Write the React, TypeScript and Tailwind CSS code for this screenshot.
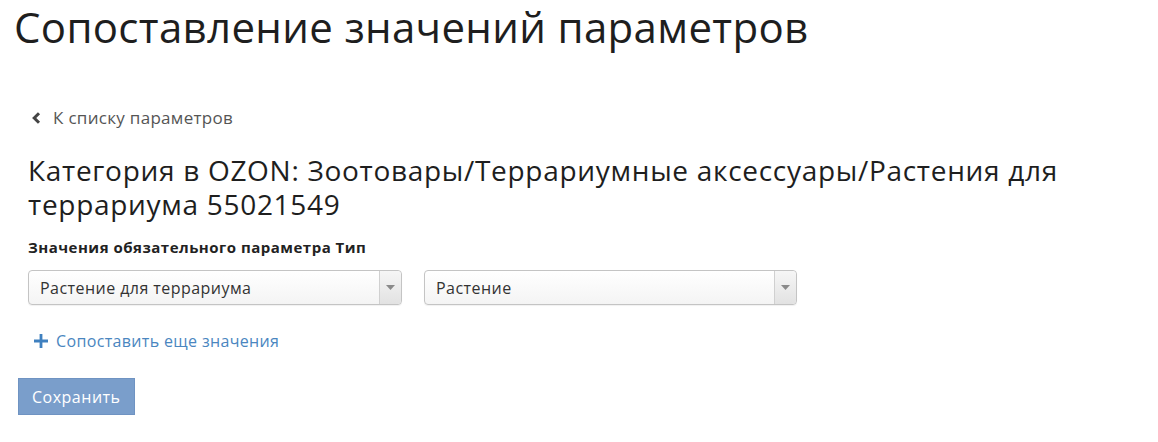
import React from "react";

function Select({ value, width }: { value: string; width: string }) {
  return (
    <div
      className={`${width} h-[35px] flex items-stretch rounded-[4px] border border-[#c4c4c4] bg-gradient-to-b from-white to-[#f4f4f4] shadow-[0_1px_1px_rgba(0,0,0,0.06)]`}
    >
      <div className="flex-1 flex items-center pl-[11px] text-[16px] tracking-[0.45px] text-[#333]">{value}</div>
      <div className="w-[22px] flex items-center justify-center border-l border-[#d0d0d0] bg-gradient-to-b from-[#f6f6f6] to-[#e2e2e2] rounded-r-[4px]">
        <svg width="9" height="5" viewBox="0 0 9 5">
          <path d="M0 0 H9 L4.5 5 Z" fill="#8a8a8a" />
        </svg>
      </div>
    </div>
  );
}

export default function App() {
  return (
    <div
      className="w-[1158px] h-[442px] bg-white overflow-hidden"
      style={{ fontFamily: '"Open Sans", "Noto Sans", sans-serif' }}
    >
      <h1 className="pl-[14px] text-[42px] leading-[54px] tracking-[0.33px] text-[#1e1e1e]">
        Сопоставление значений параметров
      </h1>
      <div className="pl-[28px] pr-[60px]">
        <a className="mt-[52px] flex items-center gap-[11px] text-[17px] leading-[24px] tracking-[0.3px] text-[#555] pl-[3px]">
          <svg width="11" height="12" viewBox="0 0 11 12" className="text-[#444]">
            <path d="M8 1.2 L3.2 6 L8 10.8" fill="none" stroke="currentColor" strokeWidth="3" />
          </svg>
          К списку параметров
        </a>
        <h2 className="mt-[23px] text-[28px] leading-[34px] tracking-[0.7px] text-[#1e1e1e]">
          Категория в OZON: Зоотовары/Террариумные аксессуары/Растения для террариума 55021549
        </h2>
        <div className="mt-[16px] text-[15px] font-bold leading-[20px] tracking-[0.5px] text-[#222]">
          Значения обязательного параметра Тип
        </div>
        <div className="mt-[13px] flex gap-[22px]">
          <Select value="Растение для террариума" width="w-[374px]" />
          <Select value="Растение" width="w-[373px]" />
        </div>
        <a className="mt-[24px] flex items-center gap-[8px] pl-[6px] text-[16px] leading-[24px] tracking-[0.35px] text-[#4a86bf]">
          <svg width="14" height="14" viewBox="0 0 14 14">
            <path d="M7 0 V14 M0 7 H14" stroke="#3f80bf" strokeWidth="2.8" />
          </svg>
          Сопоставить еще значения
        </a>
      </div>
      <div className="pl-[18px] mt-[25px]">
        <button className="h-[37px] px-[13px] bg-[#7a9ecb] border border-[#6f93c2] text-white text-[16px] tracking-[0.5px]">
          Сохранить
        </button>
      </div>
    </div>
  );
}
